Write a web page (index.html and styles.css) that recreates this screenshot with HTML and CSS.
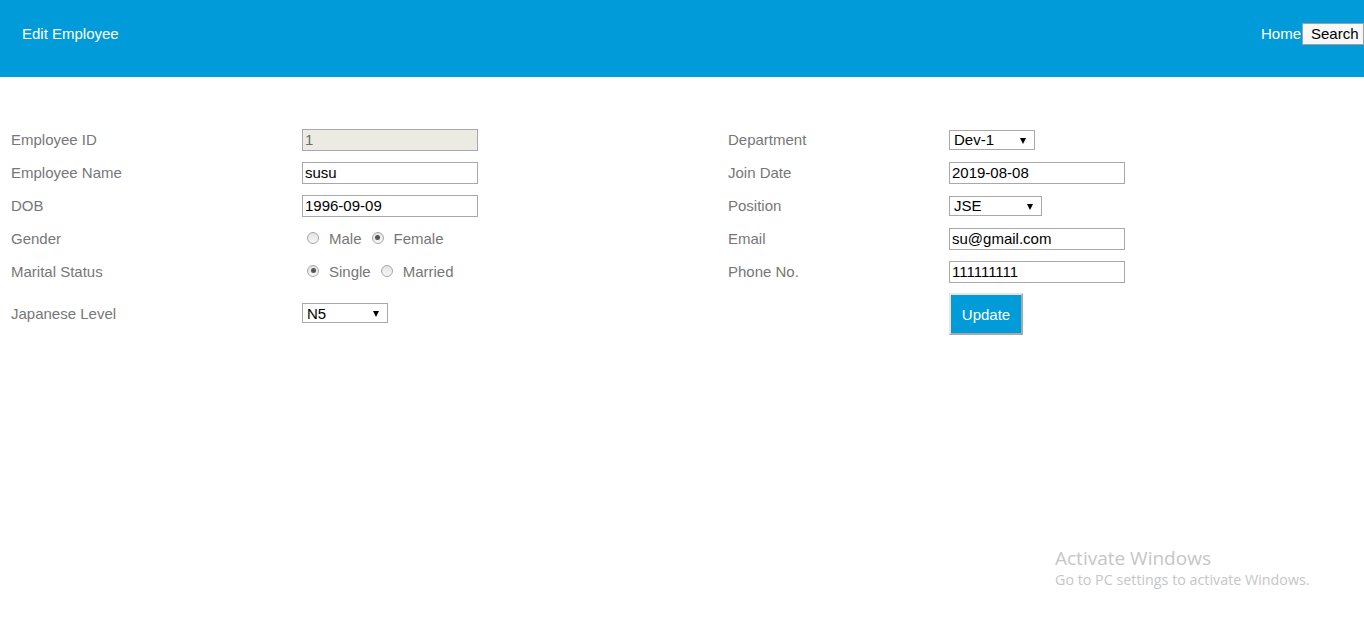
FILE: index.html
```html
<!DOCTYPE html>
<html>
<head>
<meta charset="utf-8">
<title>Edit Employee</title>
<link rel="stylesheet" href="styles.css">
</head>
<body>
<header class="topbar">
  <div class="title">Edit Employee</div>
  <nav class="nav">
    <a class="nav-link" href="#">Home</a>
    <button class="search-btn">Search</button>
  </nav>
</header>
<form class="form">
  <label class="lbl">Employee ID</label>
  <div class="cell"><input class="txt txt-disabled" type="text" value="1" disabled></div>
  <label class="lbl">Department</label>
  <div class="cell"><span class="sel sel-dept">Dev-1</span></div>

  <label class="lbl">Employee Name</label>
  <div class="cell"><input class="txt" type="text" value="susu"></div>
  <label class="lbl">Join Date</label>
  <div class="cell"><input class="txt" type="text" value="2019-08-08"></div>

  <label class="lbl">DOB</label>
  <div class="cell"><input class="txt" type="text" value="1996-09-09"></div>
  <label class="lbl">Position</label>
  <div class="cell"><span class="sel sel-pos">JSE</span></div>

  <label class="lbl">Gender</label>
  <div class="cell radios">
    <span class="radio"></span><span class="rlbl">Male</span>
    <span class="radio checked"></span><span class="rlbl">Female</span>
  </div>
  <label class="lbl">Email</label>
  <div class="cell"><input class="txt" type="text" value="su@gmail.com"></div>

  <label class="lbl">Marital Status</label>
  <div class="cell radios">
    <span class="radio checked"></span><span class="rlbl">Single</span>
    <span class="radio"></span><span class="rlbl">Married</span>
  </div>
  <label class="lbl">Phone No.</label>
  <div class="cell"><input class="txt" type="text" value="111111111"></div>

  <label class="lbl">Japanese Level</label>
  <div class="cell"><span class="sel sel-jp">N5</span></div>
  <div class="lbl"></div>
  <div class="cell cell-btn"><button type="button" class="update">Update</button></div>
</form>
<div class="watermark">
  <div class="wm1">Activate Windows</div>
  <div class="wm2">Go to PC settings to activate Windows.</div>
</div>
</body>
</html>
```
FILE: styles.css
```css
html, body {
  margin: 0;
  padding: 0;
  background: #fff;
  font-family: "Liberation Sans", Arial, sans-serif;
  font-size: 15px;
}
.topbar {
  height: 77px;
  background: #009bd8;
  display: flex;
  align-items: center;
  justify-content: space-between;
  padding-left: 22px;
  box-sizing: border-box;
}
.title {
  color: #fff;
  font-size: 15px;
  margin-top: -10px;
}
.nav {
  display: flex;
  align-items: center;
  margin-top: -10px;
}
.nav-link {
  color: #fff;
  text-decoration: none;
  font-size: 15px;
}
.search-btn {
  font-family: "Liberation Sans", Arial, sans-serif;
  font-size: 15px;
  height: 22px;
  width: 62px;
  padding: 0 0 0 8px;
  text-align: left;
  background: #f7f7f7;
  border: 1px solid #a0a0a0;
  color: #000;
  margin-left: 1px;
}
.form {
  display: grid;
  grid-template-columns: 291px 426px 221px 1fr;
  grid-template-rows: repeat(5, 33px) 50px;
  padding: 46px 0 0 11px;
  margin: 0;
}
.lbl {
  color: #777;
  font-size: 15px;
  display: flex;
  align-items: center;
}
.cell {
  display: flex;
  align-items: center;
}
.cell-btn {
  padding-top: 2px;
}
.txt {
  box-sizing: border-box;
  width: 176px;
  height: 22px;
  border: 1px solid #a9a9a9;
  padding: 0 2px;
  margin: 0;
  font-family: "Liberation Sans", Arial, sans-serif;
  font-size: 15px;
  color: #000;
  background: #fff;
  outline: none;
}
.txt-disabled {
  background: #ebebe4;
  color: #6d6d6d;
}
.sel {
  position: relative;
  box-sizing: border-box;
  height: 20px;
  border: 1px solid #a9a9a9;
  padding-left: 4px;
  display: flex;
  align-items: center;
  color: #000;
  font-size: 15px;
  background: #fff;
}
.sel::after {
  content: "";
  position: absolute;
  right: 8px;
  top: 7px;
  border-left: 3.5px solid transparent;
  border-right: 3.5px solid transparent;
  border-top: 6px solid #000;
}
.sel-dept { width: 86px; }
.sel-pos { width: 93px; }
.sel-jp { width: 86px; }
.radios {
  color: #777;
}
.radio {
  box-sizing: border-box;
  width: 12px;
  height: 12px;
  border-radius: 50%;
  border: 1px solid #a6a6a6;
  background: linear-gradient(#e4e4e4, #f6f6f6);
  margin: -2px 10px 0 5px;
  position: relative;
}
.radio.checked::after {
  content: "";
  position: absolute;
  left: 2.5px;
  top: 2.5px;
  width: 5px;
  height: 5px;
  border-radius: 50%;
  background: #555;
}
.rlbl {
  margin-right: 5px;
}
.update {
  width: 74px;
  height: 42px;
  background: #009bd8;
  color: #fff;
  font-family: "Liberation Sans", Arial, sans-serif;
  font-size: 15px;
  border: 2px solid;
  border-color: #e6e6e6 #a8a8a8 #a8a8a8 #e6e6e6;
  padding: 0;
}
.watermark {
  position: absolute;
  left: 1055px;
  top: 546px;
  color: #c6c6c6;
  font-family: "Open Sans", "Noto Sans", sans-serif;
}
.wm1 {
  font-size: 19px;
  line-height: 24px;
}
.wm2 {
  font-size: 14.3px;
  line-height: 20px;
}
```
